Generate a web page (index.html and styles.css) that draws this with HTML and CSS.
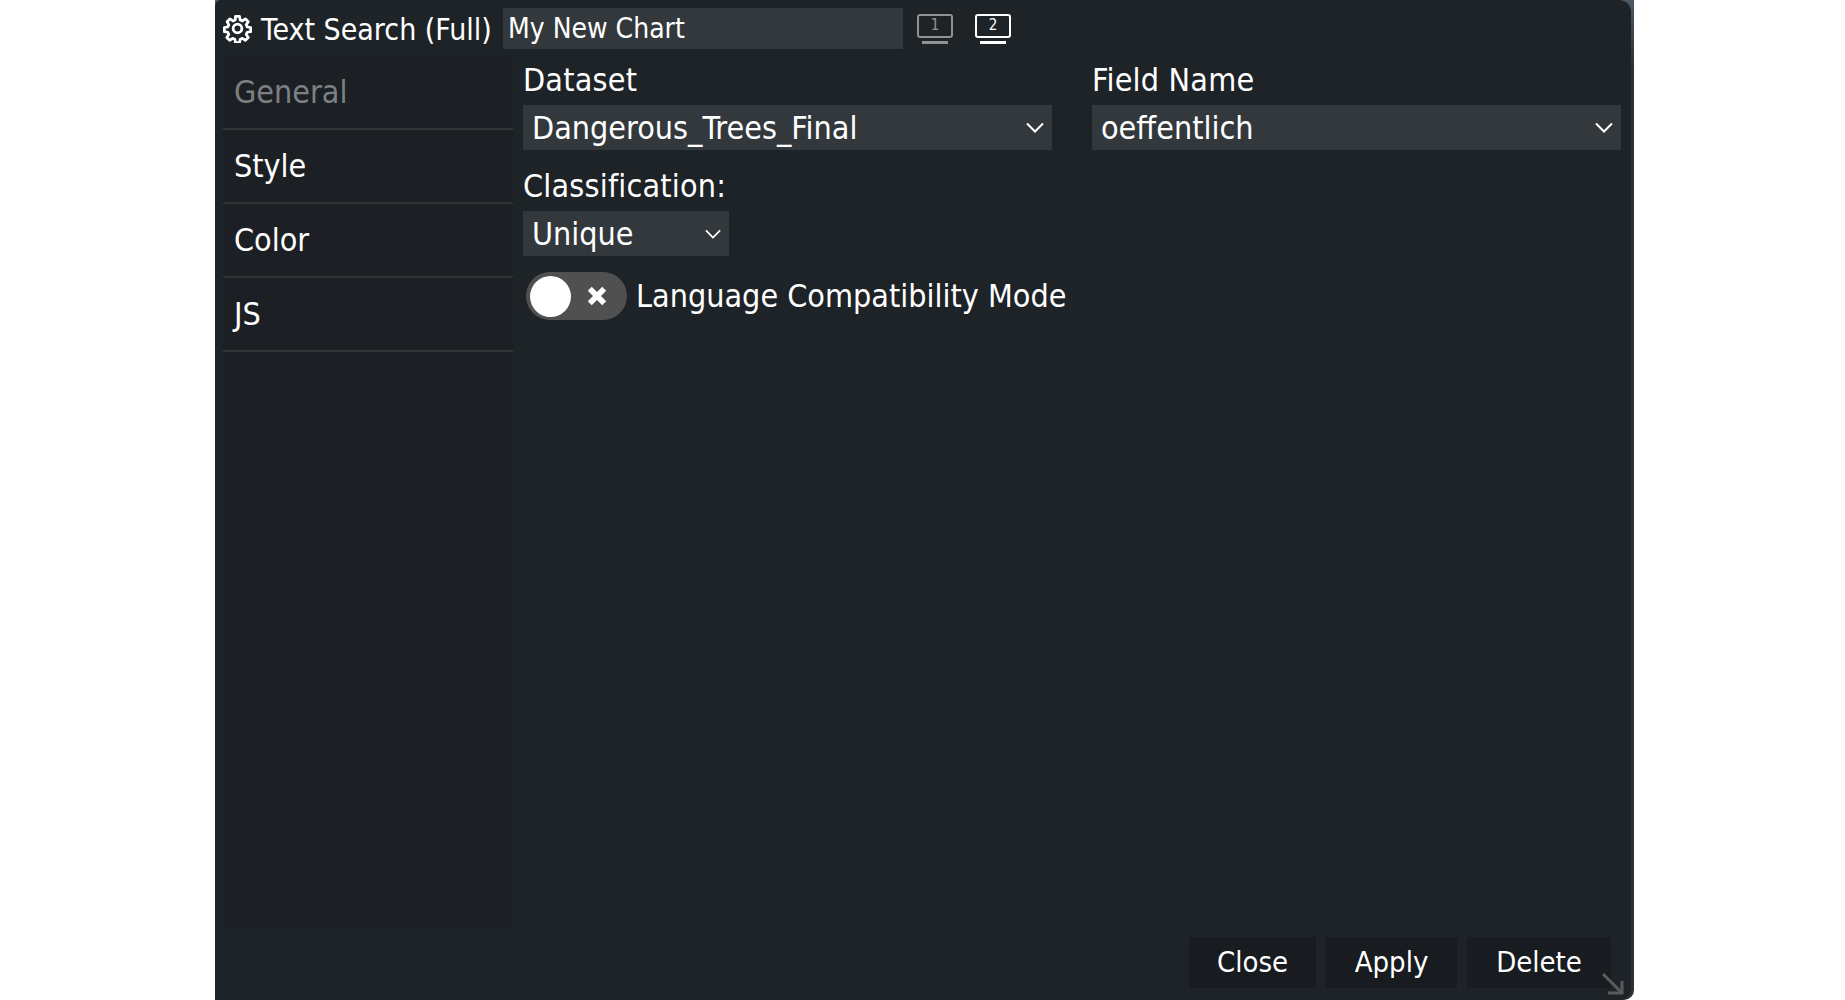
FILE: index.html
```html
<!DOCTYPE html>
<html lang="en">
<head>
<meta charset="utf-8">
<title>Text Search (Full)</title>
<link rel="stylesheet" href="styles.css">
</head>
<body>
<div class="frame">
  <div class="window">
    <header class="titlebar">
      <svg class="gear" viewBox="0 0 24 24" fill="none" stroke="#fff" stroke-width="2.300" stroke-linejoin="round"><path d="M10.300 2h3.400l.5 2.900 1.900.8 2.400-1.700 2.400 2.400-1.700 2.400.8 1.900 2.900.5v3.400l-2.900.5-.8 1.900 1.700 2.400-2.400 2.400-2.400-1.700-1.900.8-.5 2.900h-3.400l-.5-2.900-1.900-.8-2.400 1.700-2.400-2.400 1.700-2.400-.8-1.900-2.900-.5v-3.400l2.900-.5.8-1.900L3.400 6.400l2.400-2.400 2.400 1.700 1.900-.8z"/><circle cx="12" cy="12" r="3.600"/></svg>
      <span class="title">Text Search (Full)</span>
      <div class="name-input">My New Chart</div>
      <div class="screens">
        <div class="screen dim"><span class="screen-box">1</span><span class="screen-foot"></span></div>
        <div class="screen"><span class="screen-box">2</span><span class="screen-foot"></span></div>
      </div>
    </header>
    <div class="body">
      <nav class="sidebar">
        <div class="tab active">General</div>
        <div class="tab">Style</div>
        <div class="tab">Color</div>
        <div class="tab">JS</div>
      </nav>
      <main class="content">
        <div class="row">
          <div class="field">
            <label class="label">Dataset</label>
            <div class="select"><span>Dangerous_Trees_Final</span><svg class="chev" viewBox="0 0 18 11" fill="none" stroke="#fff" stroke-width="2"><path d="M1 1.500l8 8 8-8"/></svg></div>
          </div>
          <div class="field">
            <label class="label">Field Name</label>
            <div class="select"><span>oeffentlich</span><svg class="chev" viewBox="0 0 18 11" fill="none" stroke="#fff" stroke-width="2"><path d="M1 1.500l8 8 8-8"/></svg></div>
          </div>
        </div>
        <label class="label class-label">Classification:</label>
        <div class="select small"><span>Unique</span><svg class="chev" viewBox="0 0 18 11" fill="none" stroke="#fff" stroke-width="2"><path d="M1 1.500l8 8 8-8"/></svg></div>
        <div class="toggle-row">
          <div class="toggle">
            <span class="knob"></span>
            <svg class="x" viewBox="0 0 18 18" stroke="#fff" stroke-width="5"><path d="M2.500 2.500l13 13M15.500 2.500l-13 13"/></svg>
          </div>
          <span class="toggle-label">Language Compatibility Mode</span>
        </div>
      </main>
    </div>
    <footer class="footer">
      <button class="btn close">Close</button>
      <button class="btn apply">Apply</button>
      <button class="btn delete">Delete</button>
      <svg class="resize" viewBox="0 0 22 22" fill="none" stroke="#585c5f" stroke-width="3"><path d="M1 1l19 19M20 8v12H6"/></svg>
    </footer>
  </div>
</div>
</body>
</html>
```

FILE: styles.css
```css
* { box-sizing: border-box; }
html, body { margin: 0; height: 100%; background: #fff; }
body { font-family: "DejaVu Sans Condensed", "DejaVu Sans", sans-serif; font-stretch: condensed; color: #fff; }
.frame { width: 1419px; height: 1000px; margin-left: 215px; background: linear-gradient(#4d5a66, #2a3036 70px); border-radius: 0 0 10px 0; }
.window { width: 1416px; height: 1000px; background: #1e2327; border-radius: 6px 12px 12px 0; display: flex; flex-direction: column; }
.titlebar { height: 56px; display: flex; align-items: center; padding-left: 8px; padding-top: 1px; }
.gear { width: 29px; height: 29px; flex: none; }
.title { font-size: 30px; margin-left: 9px; white-space: nowrap; width: 242px; padding-top: 1px; }
.name-input { width: 400px; height: 41px; background: #33383c; font-size: 28px; line-height: 41px; padding-left: 5px; flex: none; }
.screens { display: flex; gap: 22px; margin-left: 14px; }
.screen { width: 36px; display: flex; flex-direction: column; align-items: center; gap: 3px; }
.screen.dim { opacity: .5; }
.screen-box { width: 36px; height: 24px; border: 2.500px solid #fff; border-radius: 3px; font-size: 15px; line-height: 18px; text-align: center; }
.screen-foot { width: 26px; height: 3px; background: #fff; }
.body { height: 871px; display: flex; }
.sidebar { width: 290px; margin-left: 8px; background: #1c2024; flex: none; }
.tab { height: 74px; border-bottom: 2px solid #2f3437; font-size: 32px; line-height: 72px; padding-left: 11px; }
.tab.active { color: #7d8083; }
.content { flex: 1; padding: 0 10px 0 10px; }
.row { display: flex; gap: 40px; }
.field { flex: 1; }
.label { display: block; font-size: 32px; line-height: 49px; letter-spacing: .2px; }
.class-label { margin-top: 12px; }
.select { height: 45px; background: #33383c; display: flex; align-items: center; justify-content: space-between; padding: 0 8px 0 9px; font-size: 32px; }
.select.small { width: 206px; }
.chev { width: 18px; height: 11px; flex: none; }
.small .chev { width: 16px; height: 10px; }
.toggle-row { display: flex; align-items: center; margin-top: 16px; margin-left: 3px; }
.toggle { width: 101px; height: 48px; background: #505050; border-radius: 24px; display: flex; align-items: center; padding-left: 4px; flex: none; }
.knob { width: 41px; height: 41px; background: #fff; border-radius: 50%; flex: none; }
.x { width: 20px; height: 20px; margin-left: 16px; flex: none; }
.toggle-label { font-size: 32px; margin-left: 9px; white-space: nowrap; }
.footer { flex: 1; position: relative; display: flex; padding: 10px 0 0 974px; gap: 10px; align-items: flex-start; }
.btn { height: 51px; border: 0; background: #181b1f; color: #fff; font: inherit; font-size: 29px; padding: 0 0 2px; }
.close { width: 127px; }
.apply { width: 131px; }
.delete { width: 144px; }
.resize { position: absolute; left: 1387px; bottom: 5px; width: 22px; height: 22px; }
```
